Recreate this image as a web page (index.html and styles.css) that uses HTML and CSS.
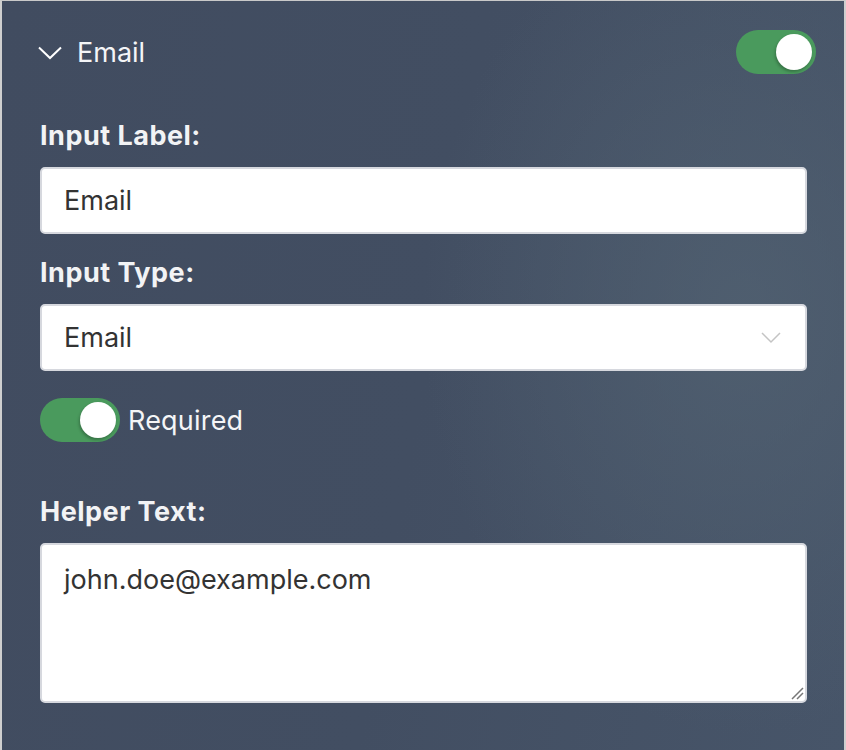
FILE: index.html
```html
<!DOCTYPE html>
<html>
<head>
<meta charset="utf-8">
<link rel="stylesheet" href="styles.css">
</head>
<body>
<div class="panel">
  <div class="header">
    <div class="title">
      <svg class="chev" width="24" height="14" viewBox="0 0 24 14"><path d="M1 1.5 L12 12 L23 1.5" fill="none" stroke="#fff" stroke-width="2"/></svg>
      <span>Email</span>
    </div>
    <div class="toggle"><div class="knob"></div></div>
  </div>

  <div class="field first">
    <label class="label">Input Label:</label>
    <div class="input">Email</div>
  </div>

  <div class="field">
    <label class="label">Input Type:</label>
    <div class="input select">
      <span>Email</span>
      <svg width="20" height="12" viewBox="0 0 20 12"><path d="M1 1 L10 10 L19 1" fill="none" stroke="#c4c4c4" stroke-width="1.5"/></svg>
    </div>
  </div>

  <div class="req">
    <div class="toggle"><div class="knob"></div></div>
    <span>Required</span>
  </div>

  <div class="field helper">
    <label class="label">Helper Text:</label>
    <div class="input textarea">
      john.doe@example.com
      <svg class="grip" width="14" height="14" viewBox="0 0 14 14"><path d="M13 2 L2 13 M13 7 L7 13" stroke="#777" stroke-width="1.5"/></svg>
    </div>
  </div>
</div>
</body>
</html>
```

FILE: styles.css
```css
* { box-sizing: border-box; }
html, body { margin: 0; padding: 0; }
body {
  width: 846px;
  height: 750px;
  font-family: Inter, "Noto Sans", sans-serif;
  overflow: hidden;
}
.panel {
  width: 846px;
  height: 750px;
  border-top: 1px solid #c9c9c9;
  border-left: 2px solid #cfcfcf;
  border-right: 2px solid #cfcfcf;
  background:
    radial-gradient(ellipse 320px 420px at 88% 42%, rgba(82, 98, 114, 0.75) 0%, rgba(82, 98, 114, 0) 100%),
    linear-gradient(100deg, #414c60 0%, #424e62 50%, #475569 100%);
  padding: 29px 28px 0 38px;
  color: #fff;
}
.header {
  display: flex;
  align-items: center;
  justify-content: space-between;
  height: 44px;
  margin-left: -2px;
}
.title {
  display: flex;
  align-items: center;
  gap: 15px;
  font-size: 27px;
  color: #f4f5f7;
}
.chev { margin-top: 2px; }
.toggle {
  width: 80px;
  height: 44px;
  border-radius: 22px;
  background: #4a9a5d;
  position: relative;
}
.knob {
  position: absolute;
  right: 4px;
  top: 4px;
  width: 36px;
  height: 36px;
  border-radius: 50%;
  background: #fff;
  box-shadow: -1px 2px 3px rgba(0,0,0,0.25);
}
.field {
  display: flex;
  flex-direction: column;
  margin-top: 24px;
}
.field.first { margin-top: 47px; }
.label {
  font-size: 27px;
  font-weight: 700;
  line-height: 30px;
  letter-spacing: 0.5px;
  color: #f2f3f5;
  margin-bottom: 16px;
}
.input {
  width: 767px;
  height: 67px;
  background: #fff;
  border: 2px solid #d6d8de;
  border-radius: 5px;
  color: #333;
  font-size: 27px;
  padding: 0 24px 0 22px;
  display: flex;
  align-items: center;
}
.select { justify-content: space-between; }
.req {
  display: flex;
  align-items: center;
  gap: 8px;
  margin-top: 27px;
  font-size: 27px;
  letter-spacing: 0.2px;
  color: #f4f5f7;
}
.field.helper { margin-top: 55px; }
.textarea {
  height: 160px;
  align-items: flex-start;
  padding-top: 18px;
  position: relative;
}
.grip {
  position: absolute;
  right: 1px;
  bottom: 1px;
}
```
